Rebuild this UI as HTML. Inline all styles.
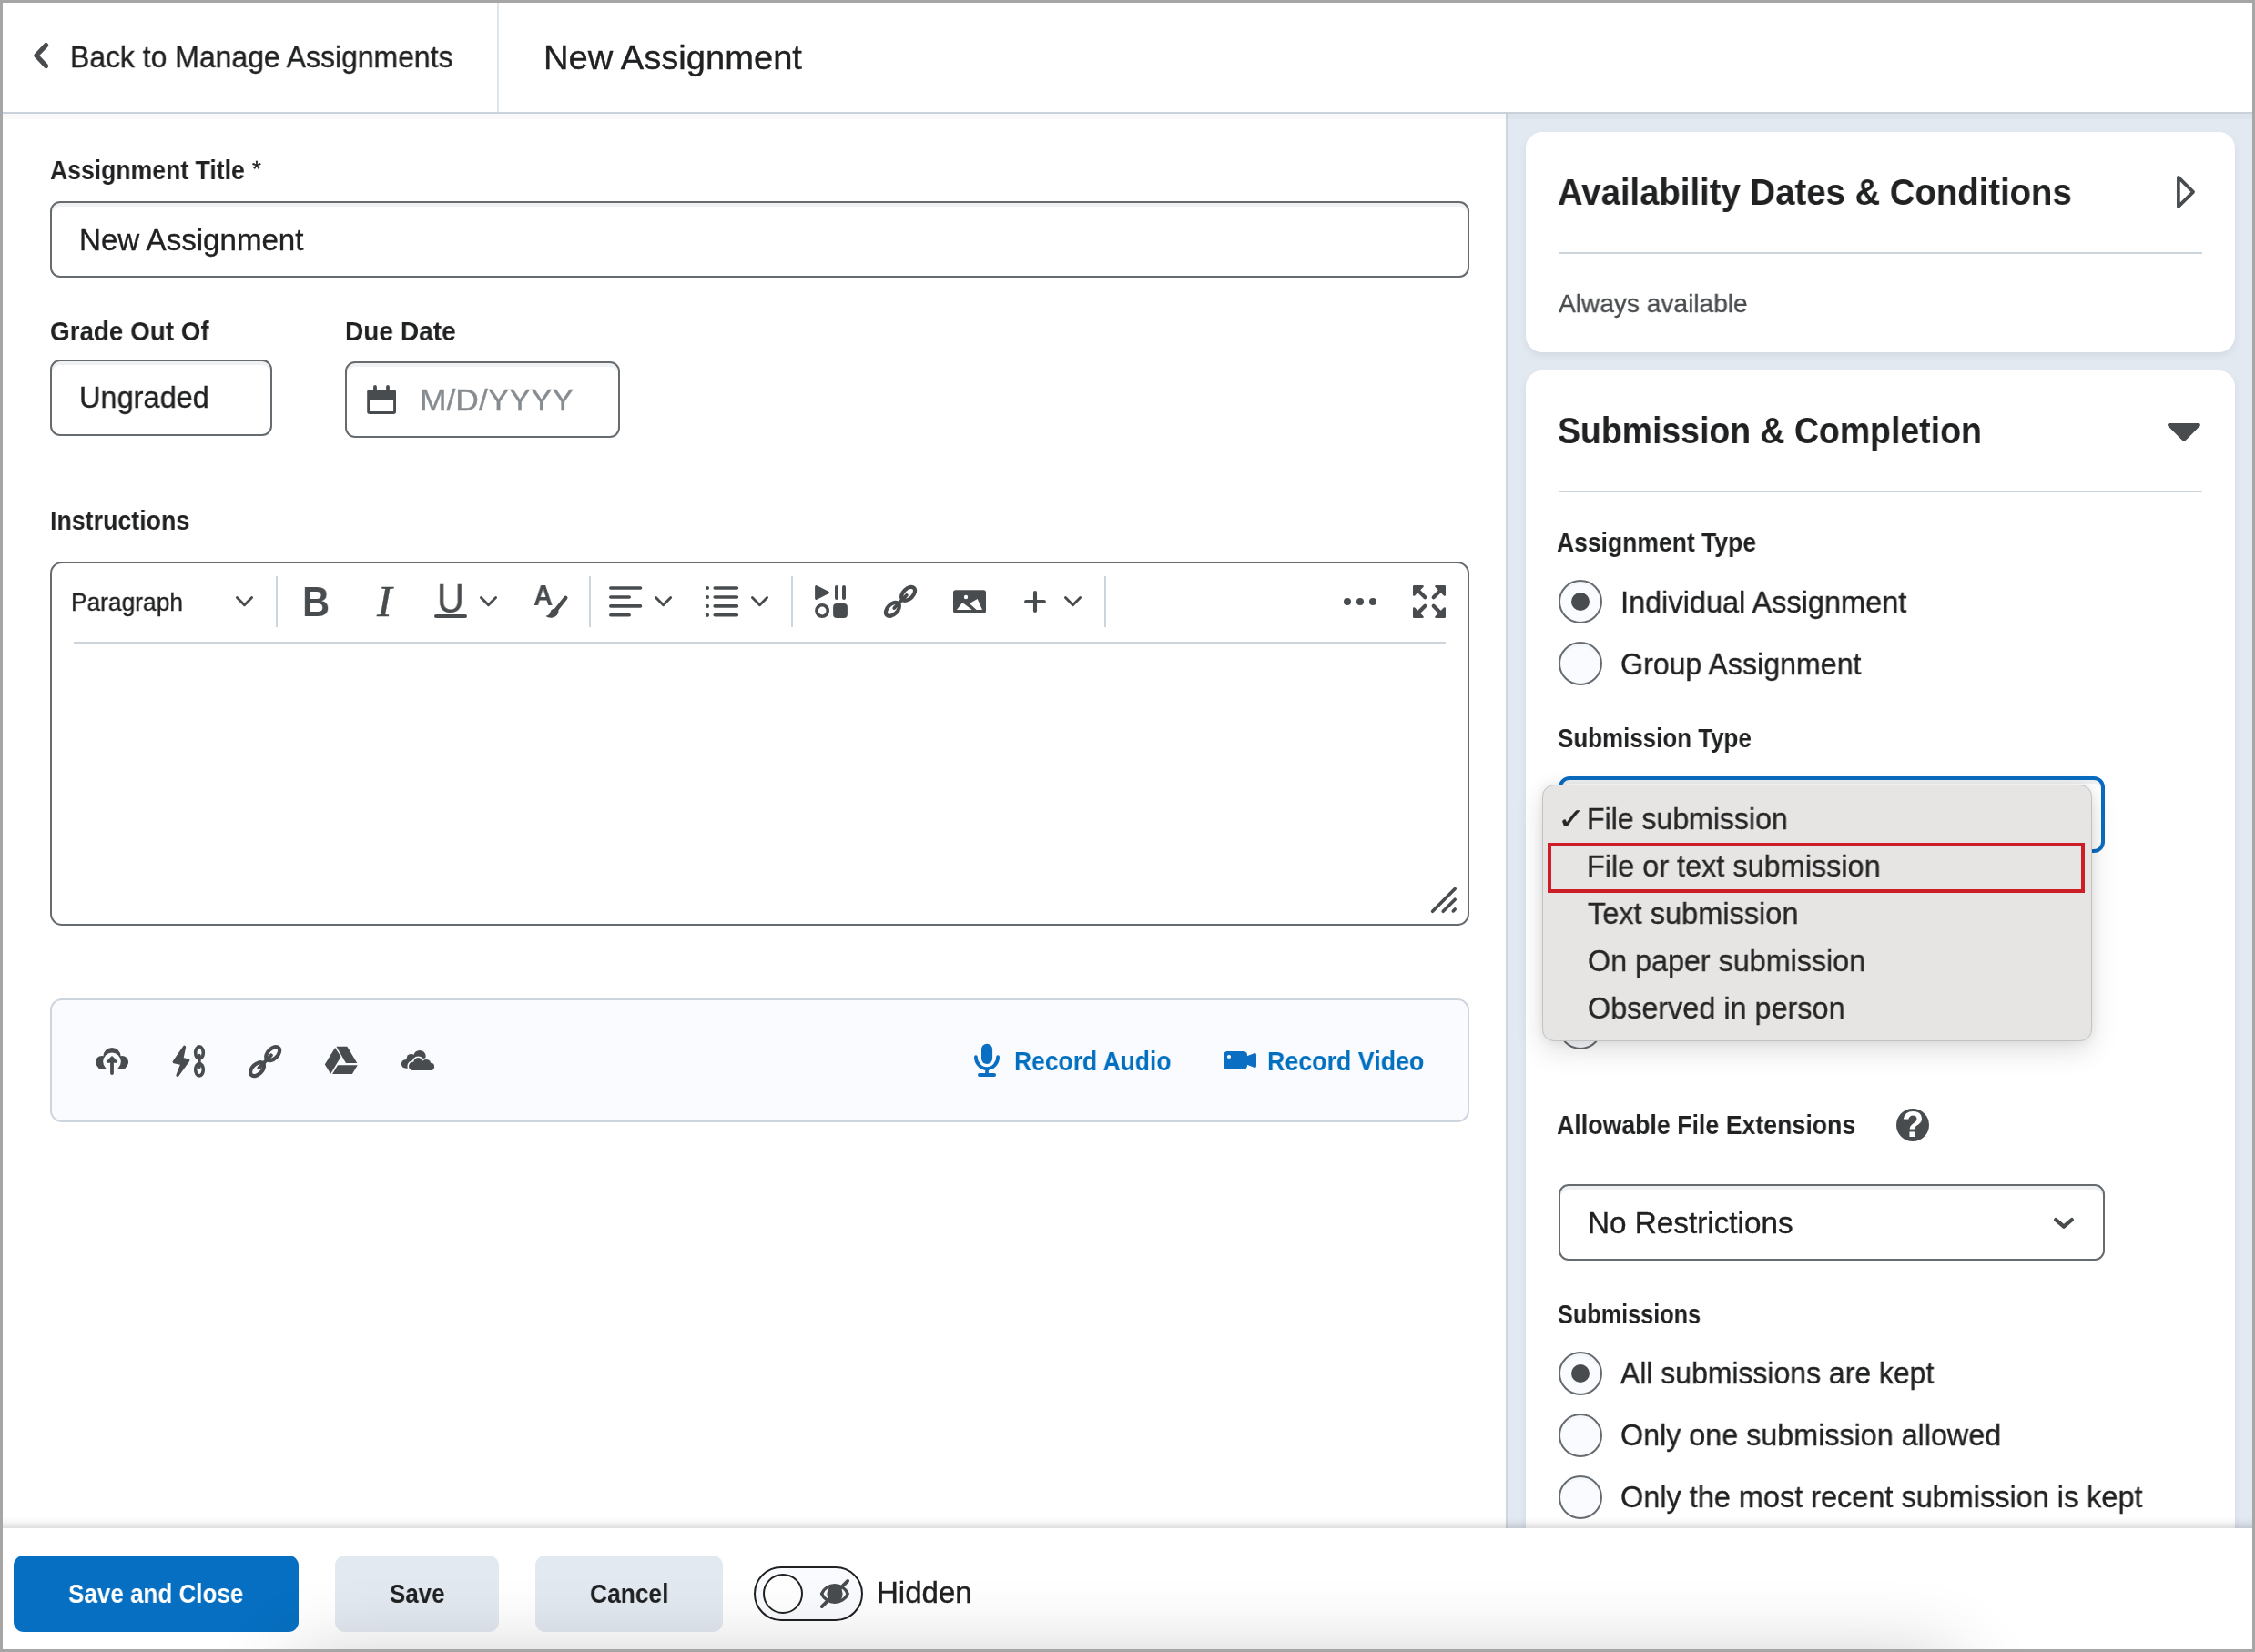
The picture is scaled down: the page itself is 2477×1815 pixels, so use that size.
<!DOCTYPE html>
<html lang="en">
<head>
<meta charset="utf-8">
<title>New Assignment</title>
<style>
*{box-sizing:border-box;margin:0;padding:0}
html,body{width:2477px;height:1815px;background:#fff}
body{overflow:hidden}
body{position:relative;font-family:"Liberation Sans",sans-serif;color:#202122}
header,main,aside,footer,section{display:contents}
.abs,.t,.box{position:absolute}
.t{white-space:nowrap;line-height:1;font-weight:400;font-style:normal;transform-origin:0 0;will-change:transform}
.t{-webkit-text-stroke:.35px currentColor}
.b{font-weight:700;-webkit-text-stroke:0}
#frame{position:absolute;left:0;top:0;width:2477px;height:1815px;border:3px solid #a6a6a6;z-index:50;pointer-events:none}
#icons{position:absolute;left:0;top:0;width:2477px;height:1815px;pointer-events:none}
/* header */
#hdrline{left:3px;top:123px;width:2471px;height:2px;background:#c9d1db}
#hdrshadow{left:3px;top:125px;width:2471px;height:6px;z-index:1;background:linear-gradient(rgba(0,0,0,.024),rgba(0,0,0,.018))}
#hdrdiv{left:546px;top:3px;width:2px;height:120px;background:#dfe5ec}
/* panels */
#right{left:1654px;top:125px;width:820px;height:1554px;background:#e3e9f1;overflow:hidden}
#rightedge{left:1654px;top:125px;width:2px;height:1554px;background:#ced6df}
.card{position:absolute;left:22px;width:779px;background:#fff;border-radius:18px;box-shadow:0 4px 9px -1px rgba(100,112,128,.15)}
.hr{position:absolute;height:2px;background:#cdd5dc}
.vr{position:absolute;top:633px;width:2px;height:56px;background:#cdd5dc}
.inp{position:absolute;border:2px solid #666b6f;border-radius:11px;background:#fff;box-shadow:inset 0 4px 0 0 rgba(177,185,190,.2)}
.radio{position:absolute;left:1712px;width:48px;height:48px;border-radius:50%;border:2px solid #666b6f;background:#f9fbff;box-shadow:inset 0 3px 0 0 rgba(177,185,190,.07)}
.radio.on::after{content:"";position:absolute;left:12px;top:12px;width:20px;height:20px;border-radius:50%;background:#494c4e}
/* footer */
#footshadow{left:3px;top:1667px;width:2471px;height:12px;background:linear-gradient(rgba(0,0,0,0),rgba(0,0,0,.03) 40%,rgba(0,0,0,.13))}
#foot{left:3px;top:1679px;width:2471px;height:133px;background:#fff}
#footglow{left:3px;top:1679px;width:2471px;height:133px;z-index:40;overflow:hidden}
#footglow i{position:absolute;left:322px;top:148px;width:1820px;height:120px;box-shadow:0 0 90px 0 rgba(0,0,0,.24)}
.btn{position:absolute;top:1709px;height:84px;border-radius:11px;background:#e3e9f1}
.btn.pri{background:#076fc1}
</style>
</head>
<body>

<header>
<!-- ===== header ===== -->
<div id="hdrline" class="abs"></div>
<div id="hdrshadow" class="abs"></div>
<div id="hdrdiv" class="abs"></div>
<span class="t" style="left:77.12px;top:44.5px;font-size:34px;transform:scaleX(0.9387)">Back to Manage Assignments</span>
<h1 class="t" style="left:597.21px;top:44.6px;font-size:37px;transform:scaleX(1.0304)">New Assignment</h1>

</header>
<main>
<!-- ===== left column ===== -->
<label class="t b" style="left:54.6px;top:172.35px;font-size:29.5px;transform:scaleX(0.9014)">Assignment Title</label>
<div class="t" style="left:276.75px;top:173.89px;font-size:24.44px;transform:scaleX(1.0283)">*</div>
<div class="inp" style="left:55px;top:221px;width:1559px;height:84px"></div>
<div class="t" style="left:86.99px;top:246.6px;font-size:33px;transform:scaleX(1.0027)">New Assignment</div>

<label class="t b" style="left:54.76px;top:348.65px;font-size:29.5px;transform:scaleX(0.9426)">Grade Out Of</label>
<div class="inp" style="left:55px;top:395px;width:244px;height:84px"></div>
<div class="t" style="left:87.03px;top:420px;font-size:33px;transform:scaleX(0.9853)">Ungraded</div>

<label class="t b" style="left:378.55px;top:348.65px;font-size:29.5px;transform:scaleX(0.9513)">Due Date</label>
<div class="inp" style="left:379px;top:397px;width:302px;height:84px"></div>
<div class="t" style="left:460.85px;top:422.7px;font-size:33px;transform:scaleX(1.0726);color:#868c90">M/D/YYYY</div>

<label class="t b" style="left:54.59px;top:556.75px;font-size:29.5px;transform:scaleX(0.9073)">Instructions</label>
<div class="inp" style="left:55px;top:617px;width:1559px;height:400px;box-shadow:none;border-radius:13px"></div>
<div class="hr" style="left:81px;top:705px;width:1507px"></div>
<div class="t" style="left:77.95px;top:647.05px;font-size:28.5px;transform:scaleX(0.9238)">Paragraph</div>
<div class="vr" style="left:303px"></div>
<div class="t b" style="left:331.59px;top:638.75px;font-size:45.94px;transform:scaleX(0.9093);color:#494c4e">B</div>
<div class="t" style="left:413.7px;top:636.86px;font-size:48.33px;transform:scaleX(1.0345);color:#494c4e;font-family:'Liberation Serif',serif;font-style:italic">I</div>
<div class="t" style="left:480.1px;top:635.91px;font-size:44.29px;transform:scaleX(0.9344);color:#494c4e">U</div>
<div class="box" style="left:477px;top:675px;width:36px;height:4px;border-radius:2px;background:#494c4e"></div>
<div class="t b" style="left:586.21px;top:639.29px;font-size:31.43px;transform:scaleX(0.9358);color:#494c4e">A</div>
<div class="vr" style="left:647px"></div>
<div class="vr" style="left:869px"></div>
<div class="vr" style="left:1213px"></div>

<div class="box" style="left:55px;top:1097px;width:1559px;height:136px;border:2px solid #cdd5dc;border-radius:13px;background:#f9fbff"></div>
<span class="t b" style="left:1114.3px;top:1151.25px;font-size:29.5px;transform:scaleX(0.8972);color:#006fbf">Record Audio</span>
<span class="t b" style="left:1392.49px;top:1151.25px;font-size:29.5px;transform:scaleX(0.9089);color:#006fbf">Record Video</span>

</main>
<aside>
<!-- ===== right column ===== -->
<div id="right" class="abs">
  <div class="card" style="top:20px;height:242px"></div>
  <div class="card" style="top:282px;height:1400px"></div>
</div>
<div id="rightedge" class="abs"></div>

<h2 class="t b" style="left:1710.67px;top:190.6px;font-size:41px;transform:scaleX(0.9343)">Availability Dates &amp; Conditions</h2>
<div class="hr" style="left:1712px;top:277px;width:707px"></div>
<div class="t" style="left:1711.6px;top:318.85px;font-size:28.5px;transform:scaleX(0.9855);color:#494c4e">Always available</div>

<h2 class="t b" style="left:1710.69px;top:453.1px;font-size:41px;transform:scaleX(0.9129)">Submission &amp; Completion</h2>
<div class="hr" style="left:1712px;top:539px;width:707px"></div>

<label class="t b" style="left:1710.1px;top:580.75px;font-size:29.5px;transform:scaleX(0.8989)">Assignment Type</label>
<div class="radio on" style="top:637px"></div>
<label class="t" style="left:1779.95px;top:644.6px;font-size:33px;transform:scaleX(0.9848)">Individual Assignment</label>
<div class="radio" style="top:705px"></div>
<label class="t" style="left:1780.43px;top:712.5px;font-size:33px;transform:scaleX(0.9742)">Group Assignment</label>

<label class="t b" style="left:1710.9px;top:796.25px;font-size:29.5px;transform:scaleX(0.8790)">Submission Type</label>
<div class="inp" style="left:1712px;top:853px;width:600px;height:84px;border:4px solid #0a6cc0;border-radius:12px"></div>
<div class="radio" style="top:1105px"></div>

<label class="t b" style="left:1710.1px;top:1220.95px;font-size:29.5px;transform:scaleX(0.9061)">Allowable File Extensions</label>
<div class="box" style="left:2083px;top:1218px;width:36px;height:36px;border-radius:50%;background:#494c4e"></div>
<div class="t b" style="left:2089.12px;top:1216.32px;font-size:39.86px;transform:scaleX(0.9891);color:#ffffff">?</div>
<div class="inp" style="left:1712px;top:1301px;width:600px;height:84px"></div>
<div class="t" style="left:1744.08px;top:1326.8px;font-size:33px;transform:scaleX(1.0084)">No Restrictions</div>

<label class="t b" style="left:1710.9px;top:1428.55px;font-size:29.5px;transform:scaleX(0.8554)">Submissions</label>
<div class="radio on" style="top:1485px"></div>
<label class="t" style="left:1780.3px;top:1492px;font-size:33px;transform:scaleX(0.9675)">All submissions are kept</label>
<div class="radio" style="top:1553px"></div>
<label class="t" style="left:1780.02px;top:1560.2px;font-size:33px;transform:scaleX(0.9783)">Only one submission allowed</label>
<div class="radio" style="top:1621px"></div>
<label class="t" style="left:1780.02px;top:1627.8px;font-size:33px;transform:scaleX(0.9834)">Only the most recent submission is kept</label>

<section>
<!-- dropdown popup -->
<div class="box" id="menu" style="left:1694px;top:862px;width:604px;height:282px;background:#e6e5e4;border:1px solid #c2c2c1;border-radius:13px;box-shadow:0 10px 30px rgba(0,0,0,.13),0 0 12px rgba(0,0,0,.07)"></div>
<div class="t" style="left:1710.78px;top:884.11px;font-size:32.96px;transform:scaleX(1.0876);color:#262626;font-family:'DejaVu Sans','Liberation Sans',sans-serif">✓</div>
<div class="t" style="left:1743.46px;top:882.7px;font-size:33px;transform:scaleX(0.9707);color:#262626">File submission</div>
<div class="box" style="left:1700px;top:926px;width:590px;height:55px;border:4px solid #cd1d26"></div>
<div class="t" style="left:1743.43px;top:934.7px;font-size:33px;transform:scaleX(0.9827);color:#262626">File or text submission</div>
<div class="t" style="left:1743.6px;top:987.1px;font-size:33px;transform:scaleX(0.9859);color:#262626">Text submission</div>
<div class="t" style="left:1743.72px;top:1039.1px;font-size:33px;transform:scaleX(0.9788);color:#262626">On paper submission</div>
<div class="t" style="left:1743.72px;top:1091px;font-size:33px;transform:scaleX(0.9810);color:#262626">Observed in person</div>

</section>
</aside>
<footer>
<!-- ===== footer ===== -->
<div id="footshadow" class="abs"></div>
<div id="foot" class="abs"></div>
<div class="btn pri" style="left:15px;width:313px"></div>
<span class="t b" style="left:75.2px;top:1735.85px;font-size:30.3px;transform:scaleX(0.8588);color:#ffffff">Save and Close</span>
<div class="btn" style="left:368px;width:180px"></div>
<span class="t b" style="left:428px;top:1735.85px;font-size:30.3px;transform:scaleX(0.8540)">Save</span>
<div class="btn" style="left:588px;width:206px"></div>
<span class="t b" style="left:647.93px;top:1735.85px;font-size:30.3px;transform:scaleX(0.8697)">Cancel</span>
<div class="box" style="left:828px;top:1721px;width:120px;height:60px;border:2px solid #202122;border-radius:30px;background:#f9fbff"></div>
<div class="box" style="left:838px;top:1729px;width:44px;height:44px;border:2px solid #202122;border-radius:50%;background:#fff"></div>
<label class="t" style="left:962.5px;top:1732.7px;font-size:33px;transform:scaleX(1.0008)">Hidden</label>

</footer>
<!-- ===== icons ===== -->
<svg id="icons" viewBox="0 0 2477 1815" width="2477" height="1815" fill="none" stroke-linecap="round" stroke-linejoin="round">
<g stroke="#494c4e" fill="none">
  <!-- header back chevron -->
  <path d="M50.6 49.6 L39.8 61 L50.6 72.6" stroke-width="5.2"/>
  <!-- toolbar chevrons -->
  <g stroke-width="2.9">
    <path d="M260.4 656.5 L268.5 664.7 L276.6 656.5"/>
    <path d="M528.4 656.5 L536.5 664.7 L544.6 656.5"/>
    <path d="M720.5 656.5 L728.6 664.7 L736.7 656.5"/>
    <path d="M826.4 656.5 L834.5 664.7 L842.6 656.5"/>
    <path d="M1170.4 656.5 L1178.5 664.7 L1186.6 656.5"/>
  </g>
  <!-- brush handle -->
  <path d="M621.3 656.8 L611.2 669.6" stroke-width="4.4"/>
  <!-- align -->
  <g stroke-width="3.6">
    <path d="M670.8 646H703.5M670.8 656H691.2M670.8 665.9H703.5M670.8 675.8H691.2"/>
    <path d="M785.2 646H809.4M785.2 656H809.4M785.2 665.9H809.4M785.2 675.8H809.4"/>
  </g>
  <!-- media: pause bars + ring -->
  <path d="M919 645V657M927 645V657" stroke-width="4"/>
  <circle cx="903.1" cy="671" r="6.2" stroke-width="3.6"/>
  <!-- link (toolbar) -->
  <g transform="translate(970.7 643)" stroke-width="4.2">
    <ellipse rx="9" ry="5.5" transform="translate(26.9 9.3) rotate(-45)"/>
    <ellipse rx="9" ry="5.5" transform="translate(9.7 26.4) rotate(-45)"/>
    <path d="M11.6 25 L25.1 11" stroke-width="3.9"/>
  </g>
  <!-- link (attachments) -->
  <g transform="translate(272.8 1148.3)" stroke-width="4.2">
    <ellipse rx="9" ry="5.5" transform="translate(26.9 9.3) rotate(-45)"/>
    <ellipse rx="9" ry="5.5" transform="translate(9.7 26.4) rotate(-45)"/>
    <path d="M11.6 25 L25.1 11" stroke-width="3.9"/>
  </g>
  <!-- plus -->
  <path d="M1137 651.1V670.9M1127.1 661H1146.9" stroke-width="4.1"/>
  <!-- fullscreen stems -->
  <path d="M1557 648 L1565.3 656.3M1583 648 L1574.7 656.3M1557 674 L1565.3 665.7M1583 674 L1574.7 665.7" stroke-width="4.2"/>
  <!-- resize handle -->
  <path d="M1573.6 1001.3 L1598.2 976.6M1585.2 1001.3 L1598.2 988.2M1596.3 1000.9 L1598.2 999" stroke-width="3.6"/>
  <!-- quicklink chain -->
  <g stroke-width="3.6">
    <ellipse cx="219" cy="1156.6" rx="4.3" ry="6.7"/>
    <ellipse cx="219" cy="1175.2" rx="4.3" ry="6.7"/>
    <path d="M219 1159.4V1172.4" stroke-width="3.4"/>
  </g>
  <!-- triangle (collapsed) -->
  <path d="M2392.9 194.9 L2409.1 210.9 L2392.9 226.9 Z" stroke-width="3.7"/>
  <!-- select chevron -->
  <path d="M2258.2 1340.1 L2267 1347.7 L2275.8 1340.1" stroke-width="4.3"/>
  <!-- eye-slash -->
  <path d="M902.6 1751 C905 1745 910.8 1741.8 916.9 1741.8 C923 1741.8 928.8 1745 931.2 1751 C928.8 1757 923 1760.2 916.9 1760.2 C910.8 1760.2 905 1757 902.6 1751 Z" stroke-width="3.4"/>
  <path d="M902.8 1765.1 L931.2 1736.9" stroke-width="3.8"/>
</g>
<g fill="#494c4e" stroke="none">
  <!-- calendar -->
  <rect x="403.2" y="428" width="31.8" height="26.9" rx="2.6"/>
  <rect x="410.1" y="423" width="3.8" height="7" rx="1.9"/>
  <rect x="424.1" y="423" width="3.8" height="7" rx="1.9"/>
  <rect x="406" y="439" width="26.1" height="13" fill="#fff"/>
  <!-- brush head -->
  <path d="M612.6 669.2 C609.6 667.6 605.6 668.8 604.6 672.2 C603.9 674.9 602.3 676.3 599.4 676.8 C601.6 679.2 607 679.6 610.4 677 C613.4 674.7 614.3 671.4 612.6 669.2 Z"/>
  <!-- list bullets -->
  <circle cx="777" cy="646" r="2.1"/><circle cx="777" cy="656" r="2.1"/><circle cx="777" cy="665.9" r="2.1"/><circle cx="777" cy="675.8" r="2.1"/>
  <!-- media: play + stop -->
  <path d="M896.6 644.6 L909.4 651 L896.6 657.4 Z" stroke="#494c4e" stroke-width="3" />
  <rect x="915.1" y="663" width="15.8" height="15.9" rx="4"/>
  <!-- image -->
  <rect x="1047" y="648.2" width="36" height="25.6" rx="2.8"/>
  <circle cx="1061" cy="656" r="2.2" fill="#fff"/>
  <path d="M1050.9 670.1 L1057.1 661.9 L1067.8 670.1 Z" fill="#fff"/>
  <path d="M1064.9 663.1 L1073.7 658.1 L1079 670.1 L1072.6 670.1 Z" fill="#fff"/>
  <!-- dots -->
  <circle cx="1480" cy="661" r="4"/><circle cx="1494" cy="661" r="4"/><circle cx="1508" cy="661" r="4"/>
  <!-- fullscreen heads -->
  <g stroke="#494c4e" stroke-width="2.4">
    <path d="M1553.2 644.2 H1562.6 L1553.2 653.6 Z"/>
    <path d="M1586.8 644.2 H1577.4 L1586.8 653.6 Z"/>
    <path d="M1553.2 677.8 H1562.6 L1553.2 668.4 Z"/>
    <path d="M1586.8 677.8 H1577.4 L1586.8 668.4 Z"/>
  </g>
  <!-- upload cloud -->
  <circle cx="111.8" cy="1166.8" r="6.9"/>
  <circle cx="123" cy="1160.6" r="9.6"/>
  <circle cx="134.2" cy="1166.8" r="6.9"/>
  <rect x="107.6" y="1165" width="30.8" height="9.7" rx="3.4"/>
  <circle cx="123" cy="1166.4" r="9.8" fill="#f9fbff"/>
  <rect x="117.5" y="1168" width="11" height="8" fill="#f9fbff"/>
  <path d="M123 1161.2 L128.2 1166.8 H117.8 Z" stroke="#494c4e" stroke-width="2" />
  <path d="M123 1165 V1179" stroke="#494c4e" stroke-width="3.8" fill="none"/>
  <!-- quicklink bolt -->
  <path d="M202.6 1150.2 L191.2 1166.6 L200 1168.6 L195 1181.4 L206.8 1165 L199.8 1163.4 Z" stroke="#494c4e" stroke-width="3.2"/>
  <!-- google drive -->
  <path d="M368.1 1151 L356.8 1169.4 L363.2 1179.8 L374.5 1161.1 Z"/>
  <path d="M369.4 1149.7 H381.3 L392.3 1168 H380 Z"/>
  <path d="M371 1170.2 H392.8 L386.9 1180 H365.1 Z"/>
  <!-- onedrive -->
  <circle cx="445.6" cy="1168.9" r="4.7"/>
  <circle cx="451.6" cy="1162.8" r="4.9"/>
  <circle cx="461" cy="1160.6" r="6.7"/>
  <rect x="445.6" y="1163" width="20" height="10.6"/>
  <g stroke="#f9fbff" stroke-width="3.2">
    <circle cx="453.6" cy="1171.4" r="4.6"/>
    <circle cx="459.4" cy="1167.2" r="5.2"/>
    <circle cx="468.2" cy="1168.8" r="4.9"/>
    <circle cx="473" cy="1171.9" r="4.1"/>
    <rect x="453.6" y="1169" width="19.4" height="7"/>
  </g>
  <circle cx="453.6" cy="1171.4" r="4.6"/>
  <circle cx="459.4" cy="1167.2" r="5.2"/>
  <circle cx="468.2" cy="1168.8" r="4.9"/>
  <circle cx="473" cy="1171.9" r="4.1"/>
  <rect x="453.6" y="1169" width="19.4" height="7"/>
  <!-- down triangle (expanded) -->
  <path d="M2383 466.9 H2414.9 L2399 482.9 Z" stroke="#494c4e" stroke-width="4"/>
  <!-- eye pupil -->
  <ellipse cx="917" cy="1751.1" rx="8.6" ry="10.2"/>
</g>
<g fill="#0a6fc2" stroke="none">
  <!-- mic -->
  <rect x="1078" y="1146.8" width="12.1" height="22.2" rx="6"/>
  <path d="M1071.9 1161.2 C1071.9 1168.2 1077.2 1174.1 1084 1174.1 C1090.8 1174.1 1096.1 1168.2 1096.1 1161.2" fill="none" stroke="#0a6fc2" stroke-width="3.8"/>
  <rect x="1082.2" y="1174" width="3.7" height="6"/>
  <path d="M1076 1181.1 H1092" fill="none" stroke="#0a6fc2" stroke-width="4"/>
  <!-- video -->
  <rect x="1344" y="1154.9" width="26" height="20.1" rx="4.2"/>
  <path d="M1369 1160.4 L1377.6 1157.2 Q1380 1156.6 1380 1159 V1171 Q1380 1173.4 1377.6 1172.8 L1369 1169.6 Z"/>
  <circle cx="1350" cy="1161" r="2.1" fill="#f9fbff"/>
</g>
</svg>
<div id="footglow" class="abs"><i></i></div>
<div id="frame"></div>
</body>
</html>
